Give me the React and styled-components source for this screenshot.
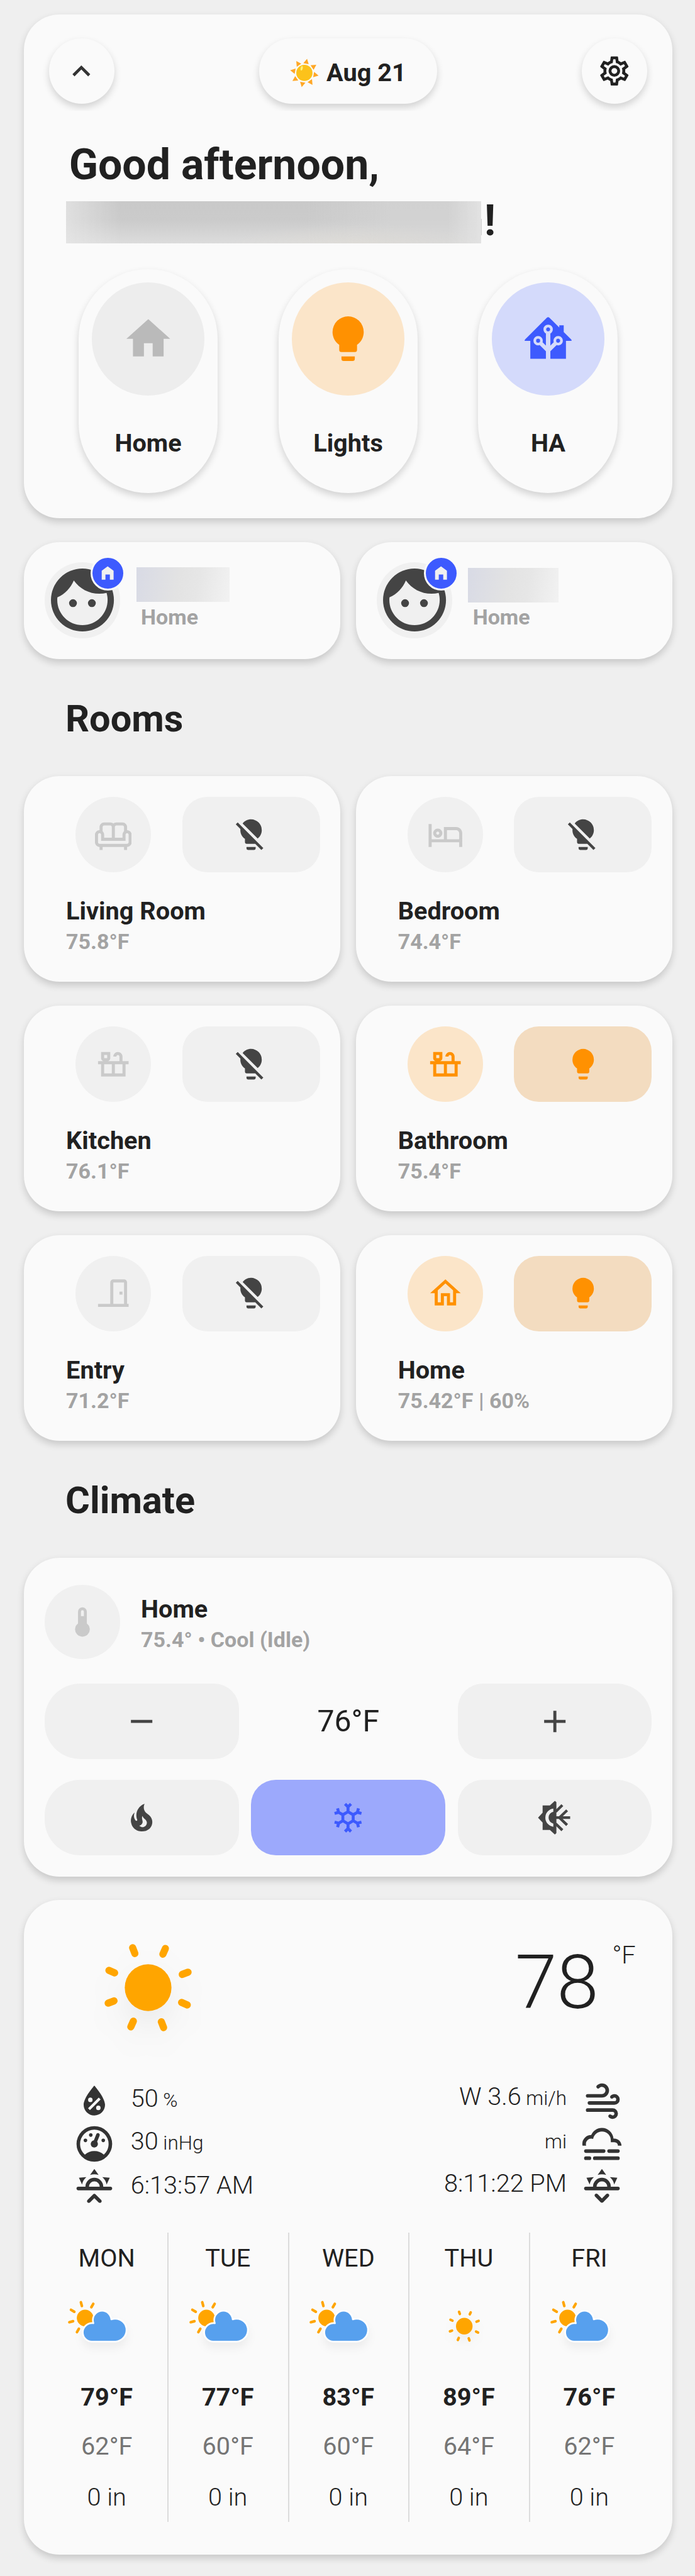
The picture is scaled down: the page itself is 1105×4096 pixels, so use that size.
import React from "react";
import styled, { createGlobalStyle, css } from "styled-components";

/* The layout is designed 390 units wide; 1rem equals 10 units. */
const GlobalStyle = createGlobalStyle`
  html { font-size: calc(100vw / 39); }
  *, *::before, *::after { box-sizing: border-box; }
  body { margin: 0; background: #efefef; }
`;

const color = {
  card: "#fafafa",
  text: "#212121",
  muted: "#a3a3a3",
  dark: "#444444",
  faint: "#cacaca",
  soft: "#f0f0f0",
  orange: "#ff9101",
  orangeSoft: "#fbe5c9",
  orangeButton: "#f3dcc0",
  blue: "#3d5afe",
  blueSoft: "#d4dafb",
  blueButton: "#9ca9fc",
};

const icons = {
  chevronUp: "M7.41,15.41L12,10.83L16.59,15.41L18,14L12,8L6,14L7.41,15.41Z",
  cog: "M12,8A4,4 0 0,1 16,12A4,4 0 0,1 12,16A4,4 0 0,1 8,12A4,4 0 0,1 12,8M12,10A2,2 0 0,0 10,12A2,2 0 0,0 12,14A2,2 0 0,0 14,12A2,2 0 0,0 12,10M10,22C9.75,22 9.54,21.82 9.5,21.58L9.13,18.93C8.5,18.68 7.96,18.34 7.44,17.94L4.95,18.95C4.73,19.03 4.46,18.95 4.34,18.73L2.34,15.27C2.21,15.05 2.27,14.78 2.46,14.63L4.57,12.97L4.5,12L4.57,11L2.46,9.37C2.27,9.22 2.21,8.95 2.34,8.73L4.34,5.27C4.46,5.05 4.73,4.96 4.95,5.05L7.44,6.05C7.96,5.66 8.5,5.32 9.13,5.07L9.5,2.42C9.54,2.18 9.75,2 10,2H14C14.25,2 14.46,2.18 14.5,2.42L14.87,5.07C15.5,5.32 16.04,5.66 16.56,6.05L19.05,5.05C19.27,4.96 19.54,5.05 19.66,5.27L21.66,8.73C21.79,8.95 21.73,9.22 21.54,9.37L19.43,11L19.5,12L19.43,13L21.54,14.63C21.73,14.78 21.79,15.05 21.66,15.27L19.66,18.73C19.54,18.95 19.27,19.04 19.05,18.95L16.56,17.95C16.04,18.34 15.5,18.68 14.87,18.93L14.5,21.58C14.46,21.82 14.25,22 14,22H10M11.25,4L10.88,6.61C9.68,6.86 8.62,7.5 7.85,8.39L5.44,7.35L4.69,8.65L6.8,10.2C6.4,11.37 6.4,12.64 6.8,13.8L4.68,15.36L5.43,16.66L7.86,15.62C8.63,16.5 9.68,17.14 10.87,17.38L11.24,20H12.76L13.13,17.39C14.32,17.14 15.37,16.5 16.14,15.62L18.57,16.66L19.32,15.36L17.2,13.81C17.6,12.64 17.6,11.37 17.2,10.2L19.31,8.65L18.56,7.35L16.15,8.39C15.38,7.5 14.32,6.86 13.12,6.62L12.75,4H11.25Z",
  home: "M10,20V14H14V20H19V12H22L12,3L2,12H5V20H10Z",
  homeVariant: "M12,3L20,9V21H15V14H9V21H4V9L12,3Z",
  homeOutline: "M12 5.69L17 10.19V18H15V12H9V18H7V10.19L12 5.69M12 3L2 12H5V20H11V14H13V20H19V12H22L12 3Z",
  homeAssistant: "M21.8,13H20V21H13V17.67L15.79,14.88L16.5,15C17.66,15 18.6,14.06 18.6,12.9C18.6,11.74 17.66,10.8 16.5,10.8A2.1,2.1 0 0,0 14.4,12.9L14.5,13.61L13,15.13V9.65C13.66,9.29 14.1,8.6 14.1,7.8A2.1,2.1 0 0,0 12,5.7A2.1,2.1 0 0,0 9.9,7.8C9.9,8.6 10.34,9.29 11,9.65V15.13L9.5,13.61L9.6,12.9A2.1,2.1 0 0,0 7.5,10.8A2.1,2.1 0 0,0 5.4,12.9A2.1,2.1 0 0,0 7.5,15L8.21,14.88L11,17.67V21H4V13H2.25C1.83,13 1.42,13 1.42,12.79C1.43,12.57 1.85,12.15 2.28,11.72L11,3C11.33,2.67 11.67,2.33 12,2.33C12.33,2.33 12.67,2.67 13,3L17,7V6H19V9L21.78,11.78C22.18,12.18 22.59,12.59 22.6,12.8C22.6,13 22.2,13 21.8,13M7.5,12A0.9,0.9 0 0,1 8.4,12.9A0.9,0.9 0 0,1 7.5,13.8A0.9,0.9 0 0,1 6.6,12.9A0.9,0.9 0 0,1 7.5,12M16.5,12C17,12 17.4,12.4 17.4,12.9C17.4,13.4 17,13.8 16.5,13.8A0.9,0.9 0 0,1 15.6,12.9A0.9,0.9 0 0,1 16.5,12M12,6.9C12.5,6.9 12.9,7.3 12.9,7.8C12.9,8.3 12.5,8.7 12,8.7C11.5,8.7 11.1,8.3 11.1,7.8C11.1,7.3 11.5,6.9 12,6.9Z",
  bulb: "M12,2A7,7 0 0,0 5,9C5,11.38 6.19,13.47 8,14.74V17A1,1 0 0,0 9,18H15A1,1 0 0,0 16,17V14.74C17.81,13.47 19,11.38 19,9A7,7 0 0,0 12,2M9,21A1,1 0 0,0 10,22H14A1,1 0 0,0 15,21V20H9V21Z",
  bulbOff: "M12,2C9.76,2 7.78,3.05 6.5,4.68L16.31,14.5C17.94,13.21 19,11.24 19,9A7,7 0 0,0 12,2M3.28,4L2,5.27L5.04,8.3C5,8.53 5,8.76 5,9C5,11.38 6.19,13.47 8,14.74V17A1,1 0 0,0 9,18H14.73L18.73,22L20,20.72L3.28,4M9,20V21A1,1 0 0,0 10,22H14A1,1 0 0,0 15,21V20H9Z",
  face: "M9,11.75A1.25,1.25 0 0,0 7.75,13A1.25,1.25 0 0,0 9,14.25A1.25,1.25 0 0,0 10.25,13A1.25,1.25 0 0,0 9,11.75M15,11.75A1.25,1.25 0 0,0 13.75,13A1.25,1.25 0 0,0 15,14.25A1.25,1.25 0 0,0 16.25,13A1.25,1.25 0 0,0 15,11.75M12,2A10,10 0 0,0 2,12A10,10 0 0,0 12,22A10,10 0 0,0 22,12A10,10 0 0,0 12,2M12,20C7.59,20 4,16.41 4,12C4,11.71 4,11.42 4.05,11.14C6.41,10.09 8.28,8.16 9.26,5.77C11.07,8.33 14.05,10 17.42,10C18.2,10 18.95,9.91 19.67,9.74C19.88,10.45 20,11.21 20,12C20,16.41 16.41,20 12,20Z",
  sofa: "M21 9V7C21 5.35 19.65 4 18 4H14C13.23 4 12.53 4.3 12 4.78C11.47 4.3 10.77 4 10 4H6C4.35 4 3 5.35 3 7V9C1.35 9 0 10.35 0 12V17C0 18.65 1.35 20 3 20V22H5V20H19V22H21V20C22.65 20 24 18.65 24 17V12C24 10.35 22.65 9 21 9M14 6H18C18.55 6 19 6.45 19 7V9.78C18.39 10.33 18 11.12 18 12V14H13V7C13 6.45 13.45 6 14 6M5 7C5 6.45 5.45 6 6 6H10C10.55 6 11 6.45 11 7V14H6V12C6 11.12 5.61 10.33 5 9.78V7M22 17C22 17.55 21.55 18 21 18H3C2.45 18 2 17.55 2 17V12C2 11.45 2.45 11 3 11S4 11.45 4 12V16H20V12C20 11.45 20.45 11 21 11S22 11.45 22 12V17Z",
  bed: "M7 14C8.66 14 10 12.66 10 11C10 9.34 8.66 8 7 8C5.34 8 4 9.34 4 11C4 12.66 5.34 14 7 14M7 10C7.55 10 8 10.45 8 11C8 11.55 7.55 12 7 12C6.45 12 6 11.55 6 11C6 10.45 6.45 10 7 10M19 7H11V15H3V5H1V20H3V17H21V20H23V11C23 8.79 21.21 7 19 7M21 15H13V9H19C20.1 9 21 9.9 21 11V15Z",
  counter: "M22 10H18V7C18 5.34 16.66 4 15 4C13.34 4 12 5.34 12 7H14C14 6.45 14.45 6 15 6C15.55 6 16 6.45 16 7V10H8C9.1 10 10 9.1 10 8V4H4V8C4 9.1 4.9 10 6 10H2V12H4V20H20V12H22V10M6 6H8V8H6V6M6 12H11V18H6V12M18 18H13V12H18V18Z",
  door: "M16,11H18V13H16V11M12,3H19C20.11,3 21,3.89 21,5V19H22V21H2V19H10V5C10,3.89 10.89,3 12,3M12,5V19H19V5H12Z",
  thermometer: "M15 13V5A3 3 0 0 0 9 5V13A5 5 0 1 0 15 13M12 4A1 1 0 0 1 13 5V8H11V5A1 1 0 0 1 12 4Z",
  minus: "M19,13H5V11H19V13Z",
  plus: "M19,13H13V19H11V13H5V11H11V5H13V11H19V13Z",
  fire: "M17.66 11.2C17.43 10.9 17.15 10.64 16.89 10.38C16.22 9.78 15.46 9.35 14.82 8.72C13.33 7.26 13 4.85 13.95 3C13 3.23 12.17 3.75 11.46 4.32C8.87 6.4 7.85 10.07 9.07 13.22C9.11 13.32 9.15 13.42 9.15 13.55C9.15 13.77 9 13.97 8.8 14.05C8.57 14.15 8.33 14.09 8.14 13.93C8.08 13.88 8.04 13.83 8 13.76C6.87 12.33 6.69 10.28 7.45 8.64C5.78 10 4.87 12.3 5 14.47C5.06 14.97 5.12 15.47 5.29 15.97C5.43 16.57 5.7 17.17 6 17.7C7.08 19.43 8.95 20.67 10.96 20.92C13.1 21.19 15.39 20.8 17.03 19.32C18.86 17.66 19.5 15 18.56 12.72L18.43 12.46C18.22 12 17.66 11.2 17.66 11.2M14.5 17.5C14.22 17.74 13.76 18 13.4 18.1C12.28 18.5 11.16 17.94 10.5 17.28C11.69 17 12.4 16.12 12.61 15.23C12.78 14.43 12.46 13.77 12.33 13C12.21 12.26 12.23 11.63 12.5 10.94C12.69 11.32 12.89 11.7 13.13 12C13.9 13 15.11 13.44 15.37 14.8C15.41 14.94 15.43 15.08 15.43 15.23C15.46 16.05 15.1 16.95 14.5 17.5H14.5Z",
  snowflake: "M20.79,13.95L18.46,14.57L16.46,13.44V10.56L18.46,9.43L20.79,10.05L21.31,8.12L19.54,7.65L20,5.88L18.07,5.36L17.45,7.69L15.45,8.82L13,7.38V5.12L14.71,3.41L13.29,2L12,3.29L10.71,2L9.29,3.41L11,5.12V7.38L8.5,8.82L6.5,7.69L5.92,5.36L4,5.88L4.47,7.65L2.7,8.12L3.22,10.05L5.55,9.43L7.55,10.56V13.45L5.55,14.58L3.22,13.96L2.7,15.89L4.47,16.36L4,18.12L5.93,18.64L6.55,16.31L8.55,15.18L11,16.62V18.88L9.29,20.59L10.71,22L12,20.71L13.29,22L14.7,20.59L13,18.88V16.62L15.5,15.17L17.5,16.3L18.12,18.63L20,18.12L19.53,16.35L21.3,15.88L20.79,13.95M9.5,10.56L12,9.11L14.5,10.56V13.44L12,14.89L9.5,13.44V10.56Z",
  humidity: "M12,3.25C12,3.25 6,10 6,14C6,17.32 8.69,20 12,20A6,6 0 0,0 18,14C18,10 12,3.25 12,3.25M14.47,9.97L15.53,11.03L9.53,17.03L8.47,15.97M9.75,10A1.25,1.25 0 0,1 11,11.25A1.25,1.25 0 0,1 9.75,12.5A1.25,1.25 0 0,1 8.5,11.25A1.25,1.25 0 0,1 9.75,10M14.25,14.5A1.25,1.25 0 0,1 15.5,15.75A1.25,1.25 0 0,1 14.25,17A1.25,1.25 0 0,1 13,15.75A1.25,1.25 0 0,1 14.25,14.5Z",
  gauge: "M12,2A10,10 0 0,0 2,12A10,10 0 0,0 12,22A10,10 0 0,0 22,12A10,10 0 0,0 12,2M12,4A8,8 0 0,1 20,12C20,14.4 19,16.5 17.3,18C15.9,16.7 14,16 12,16C10,16 8.2,16.7 6.7,18C5,16.5 4,14.4 4,12A8,8 0 0,1 12,4M14,5.89C13.62,5.9 13.26,6.15 13.1,6.54L11.81,9.77L11.71,10C11,10.13 10.41,10.6 10.14,11.26C9.73,12.29 10.23,13.45 11.26,13.86C12.29,14.27 13.45,13.77 13.86,12.74C14.12,12.08 14,11.32 13.57,10.76L13.67,10.5L14.96,7.29L14.97,7.26C15.17,6.75 14.92,6.17 14.41,5.96C14.28,5.91 14.15,5.89 14,5.89M10,6A1,1 0 0,0 9,7A1,1 0 0,0 10,8A1,1 0 0,0 11,7A1,1 0 0,0 10,6M7,9A1,1 0 0,0 6,10A1,1 0 0,0 7,11A1,1 0 0,0 8,10A1,1 0 0,0 7,9M17,9A1,1 0 0,0 16,10A1,1 0 0,0 17,11A1,1 0 0,0 18,10A1,1 0 0,0 17,9Z",
  sunrise: "M3,12H7A5,5 0 0,1 12,7A5,5 0 0,1 17,12H21A1,1 0 0,1 22,13A1,1 0 0,1 21,14H3A1,1 0 0,1 2,13A1,1 0 0,1 3,12M15,12A3,3 0 0,0 12,9A3,3 0 0,0 9,12H15M12,2L14.39,5.42C13.65,5.15 12.84,5 12,5C11.16,5 10.35,5.15 9.61,5.42L12,2M3.34,7L7.5,6.65C6.9,7.16 6.36,7.78 5.94,8.5C5.5,9.24 5.25,10 5.11,10.79L3.34,7M20.65,7L18.88,10.79C18.74,10 18.47,9.23 18.05,8.5C17.63,7.78 17.1,7.15 16.5,6.64L20.65,7M12.71,16.3L15.82,19.41C16.21,19.8 16.21,20.43 15.82,20.82C15.43,21.21 14.8,21.21 14.41,20.82L12,18.41L9.59,20.82C9.2,21.21 8.57,21.21 8.18,20.82C7.79,20.43 7.79,19.8 8.18,19.41L11.29,16.3C11.5,16.1 11.74,16 12,16C12.26,16 12.5,16.1 12.71,16.3Z",
  sunset: "M3,12H7A5,5 0 0,1 12,7A5,5 0 0,1 17,12H21A1,1 0 0,1 22,13A1,1 0 0,1 21,14H3A1,1 0 0,1 2,13A1,1 0 0,1 3,12M15,12A3,3 0 0,0 12,9A3,3 0 0,0 9,12H15M12,2L14.39,5.42C13.65,5.15 12.84,5 12,5C11.16,5 10.35,5.15 9.61,5.42L12,2M3.34,7L7.5,6.65C6.9,7.16 6.36,7.78 5.94,8.5C5.5,9.24 5.25,10 5.11,10.79L3.34,7M20.65,7L18.88,10.79C18.74,10 18.47,9.23 18.05,8.5C17.63,7.78 17.1,7.15 16.5,6.64L20.65,7M12.71,20.71L15.82,17.6C16.21,17.21 16.21,16.57 15.82,16.18C15.43,15.79 14.8,15.79 14.41,16.18L12,18.59L9.59,16.18C9.2,15.79 8.57,15.79 8.18,16.18C7.79,16.57 7.79,17.21 8.18,17.6L11.29,20.71C11.5,20.9 11.74,21 12,21C12.26,21 12.5,20.9 12.71,20.71Z",
  wind: "M4,10A1,1 0 0,1 3,9A1,1 0 0,1 4,8H12A2,2 0 0,0 14,6A2,2 0 0,0 12,4C11.45,4 10.95,4.22 10.59,4.59C10.2,5 9.56,5 9.17,4.59C8.78,4.2 8.78,3.56 9.17,3.17C9.9,2.45 10.9,2 12,2A4,4 0 0,1 16,6A4,4 0 0,1 12,10H4M19,12A1,1 0 0,0 20,11A1,1 0 0,0 19,10C18.72,10 18.47,10.11 18.29,10.29C17.9,10.68 17.27,10.68 16.88,10.29C16.5,9.9 16.5,9.27 16.88,8.88C17.42,8.34 18.17,8 19,8A3,3 0 0,1 22,11A3,3 0 0,1 19,14H5A1,1 0 0,1 4,13A1,1 0 0,1 5,12H19M18,18H4A1,1 0 0,1 3,17A1,1 0 0,1 4,16H18A3,3 0 0,1 21,19A3,3 0 0,1 18,22C17.17,22 16.42,21.66 15.88,21.12C15.5,20.73 15.5,20.1 15.88,19.71C16.27,19.32 16.9,19.32 17.29,19.71C17.47,19.89 17.72,20 18,20A1,1 0 0,0 19,19A1,1 0 0,0 18,18Z",
  fog: "M3,15H13A1,1 0 0,1 14,16A1,1 0 0,1 13,17H3A1,1 0 0,1 2,16A1,1 0 0,1 3,15M16,15H21A1,1 0 0,1 22,16A1,1 0 0,1 21,17H16A1,1 0 0,1 15,16A1,1 0 0,1 16,15M1,12A5,5 0 0,1 6,7C7,4.65 9.3,3 12,3C15.43,3 18.24,5.66 18.5,9.03L19,9C21.19,9 22.97,10.76 23,13H21A2,2 0 0,0 19,11H17V10A5,5 0 0,0 12,5C9.5,5 7.45,6.82 7.06,9.19C6.73,9.07 6.37,9 6,9A3,3 0 0,0 3,12C3,12.35 3.06,12.69 3.17,13H1.1L1,12M3,19H5A1,1 0 0,1 6,20A1,1 0 0,1 5,21H3A1,1 0 0,1 2,20A1,1 0 0,1 3,19M8,19H21A1,1 0 0,1 22,20A1,1 0 0,1 21,21H8A1,1 0 0,1 7,20A1,1 0 0,1 8,19Z",
};

/* ---------- shared parts ---------- */

const Page = styled.main`
  min-height: 100vh;
  padding: 0.82rem 1.27rem 1.2rem 1.34rem;
  background: #efefef;
  color: ${color.text};
  font-family: Roboto, "Liberation Sans", sans-serif;
`;

const raised = css`
  background: ${color.card};
  box-shadow: 0 0.2rem 0.4rem rgba(0, 0, 0, 0.16);
`;

const Card = styled.section`
  ${raised}
  border-radius: 2rem;
`;

const Heading = styled.h2`
  display: flex;
  align-items: center;
  height: 6.57rem;
  margin: 0;
  padding: 0.15rem 0 0 2.33rem;
  font-size: 2.1rem;
  font-weight: 700;
`;

const Svg = styled.svg`
  display: block;
  flex: none;
  width: ${(p) => p.$size}rem;
  height: ${(p) => p.$size}rem;
  fill: ${(p) => p.$fill};
`;

const Icon = ({ name, size = 2.06, fill = color.dark }) => (
  <Svg viewBox="0 0 24 24" $size={size} $fill={fill} aria-hidden="true">
    <path d={icons[name]} />
  </Svg>
);

const Name = styled.div`
  font-size: 1.4rem;
  line-height: 1.8rem;
  font-weight: 700;
`;

const State = styled.div`
  font-size: 1.2rem;
  line-height: 1.68rem;
  font-weight: 700;
  color: ${color.muted};
`;

const Circle = styled.div`
  display: flex;
  align-items: center;
  justify-content: center;
  flex: none;
  width: 4.24rem;
  height: ${(p) => p.$height || 4.24}rem;
  border-radius: 50%;
  background: ${(p) => (p.$on ? color.orangeSoft : color.soft)};
`;

/* ---------- header ---------- */

const HeaderCard = styled(Card)`
  height: 28.27rem;
  padding-top: 1.34rem;
`;

const TopBar = styled.div`
  display: flex;
  justify-content: space-between;
  height: 3.66rem;
  padding: 0 1.41rem;
  clip-path: inset(-1rem 0 -0.4rem);
`;

const RoundButton = styled.button`
  ${raised}
  display: flex;
  align-items: center;
  justify-content: center;
  width: 3.66rem;
  height: 3.66rem;
  padding: 0;
  border: 0;
  border-radius: 50%;
`;

const DateChip = styled.div`
  ${raised}
  display: flex;
  align-items: center;
  justify-content: center;
  gap: 0.42rem;
  width: 9.97rem;
  padding-top: 0.2rem;
  border-radius: 1.83rem;
  font-size: 1.4rem;
  font-weight: 700;
`;

const Greeting = styled.h1`
  margin: 1.87rem 0 0;
  padding-left: 2.53rem;
  font-size: 2.4rem;
  line-height: 3.13rem;
  font-weight: 700;
`;

const GreetingLine = styled.span`
  display: flex;
  align-items: center;
`;

const HiddenGreetingName = styled.span`
  position: relative;
  width: 23.3rem;
  height: 2.37rem;
  margin: 0.2rem 0.16rem 0 -0.16rem;
  background:
    radial-gradient(ellipse 30% 45% at 70% 100%, rgba(224, 220, 212, 0.5), transparent),
    linear-gradient(90deg, rgba(232, 232, 232, 0.7), transparent 13%, transparent 58%, rgba(215, 215, 215, 0.6) 78%, rgba(215, 215, 215, 0.6) 92%, #e2e2e2),
    linear-gradient(180deg, #c9c9c9, #cbcbcb 45%, #dcdcdc);
  &::after {
    content: "";
    position: absolute;
    left: 100%;
    top: 0.98rem;
    width: 1px;
    height: 0.92rem;
    background: #d0d0d0;
  }
`;

const NavRow = styled.nav`
  display: flex;
  justify-content: space-between;
  padding: 0 3.06rem;
  margin-top: 1.17rem;
`;

const NavPill = styled.div`
  ${raised}
  display: flex;
  flex-direction: column;
  align-items: center;
  width: 7.83rem;
  height: 12.55rem;
  padding-top: 0.74rem;
  border-radius: 3.92rem;
  font-size: 1.4rem;
  line-height: 5.38rem;
  font-weight: 700;
`;

const NavCircle = styled.div`
  display: flex;
  align-items: center;
  justify-content: center;
  width: 6.33rem;
  height: 6.33rem;
  border-radius: 50%;
  background: ${(p) => p.$bg};
`;

const SunEmoji = () => (
  <Svg viewBox="-8 -8 16 16" $size={1.62} $fill="#ffa726" aria-hidden="true">
    {[10, 55, 100, 145, 190, 235, 280, 325].map((a) => (
      <path key={a} d="M-1.5 -5.2L0.1 -8L1.5 -5.2Z" transform={`rotate(${a})`} />
    ))}
    <circle r="4.5" fill="#fcc21b" />
    <ellipse cx="-2" cy="-2.2" rx="0.6" ry="1.3" fill="#fff176" transform="rotate(12)" />
  </Svg>
);

/* ---------- people ---------- */

const TwoColumns = styled.div`
  display: grid;
  grid-template-columns: 1fr 1fr;
  gap: 1.335rem 0.85rem;
`;

const People = styled(TwoColumns)`
  margin-top: 1.33rem;
`;

const PersonCard = styled(Card)`
  display: flex;
  gap: 1.16rem;
  height: 6.57rem;
  padding: 1.15rem 0 0 1.17rem;
`;

const Avatar = styled(Circle)`
  position: relative;
`;

const Badge = styled.span`
  position: absolute;
  top: -0.38rem;
  left: ${(p) => p.$left}rem;
  display: flex;
  align-items: center;
  justify-content: center;
  width: 1.94rem;
  height: 1.94rem;
  border: 0.14rem solid ${color.card};
  border-radius: 50%;
  background: ${color.blue};
`;

const PersonInfo = styled.div`
  display: flex;
  flex-direction: column;
  justify-content: flex-end;
  gap: ${(p) => p.$gap}rem;
  height: 3.93rem;
`;

const HiddenName = styled.div`
  width: ${(p) => p.$width}rem;
  height: 1.92rem;
  margin-left: -0.26rem;
  background: linear-gradient(100deg, #d8dae5, #e3e3e3 45%, #e6e6e6 65%, #f2f2f2);
`;

const Person = ({ width, gap, badgeLeft }) => (
  <PersonCard>
    <Avatar>
      <Icon name="face" size={4.24} />
      <Badge $left={badgeLeft}>
        <Icon name="homeVariant" size={1} fill="#f0f0f0" />
      </Badge>
    </Avatar>
    <PersonInfo $gap={gap}>
      <HiddenName $width={width} />
      <State>Home</State>
    </PersonInfo>
  </PersonCard>
);

/* ---------- rooms ---------- */

const RoomCard = styled(Card)`
  height: 11.545rem;
  padding: 1.15rem 1.15rem 0;
`;

const RoomControls = styled.div`
  display: grid;
  grid-template-columns: 1fr 1fr;
  justify-items: center;
  height: 4.24rem;
  margin: 0 0 1.27rem;
`;

const RoomButton = styled.div`
  display: flex;
  align-items: center;
  justify-content: center;
  width: 100%;
  border-radius: 1.4rem;
  background: ${(p) => (p.$on ? color.orangeButton : color.soft)};
`;

const RoomText = styled.div`
  padding-left: 1.22rem;
`;

const rooms = [
  { name: "Living Room", state: "75.8°F", icon: "sofa" },
  { name: "Bedroom", state: "74.4°F", icon: "bed" },
  { name: "Kitchen", state: "76.1°F", icon: "counter" },
  { name: "Bathroom", state: "75.4°F", icon: "counter", on: true },
  { name: "Entry", state: "71.2°F", icon: "door" },
  { name: "Home", state: "75.42°F | 60%", icon: "homeOutline", on: true },
];

const Room = ({ name, state, icon, on }) => (
  <RoomCard>
    <RoomControls>
      <Circle $on={on}>
        <Icon name={icon} fill={on ? color.orange : color.faint} />
      </Circle>
      <RoomButton $on={on}>
        <Icon name={on ? "bulb" : "bulbOff"} fill={on ? color.orange : color.dark} />
      </RoomButton>
    </RoomControls>
    <RoomText>
      <Name>{name}</Name>
      <State>{state}</State>
    </RoomText>
  </RoomCard>
);

/* ---------- climate ---------- */

const ClimateCard = styled(Card)`
  height: 17.88rem;
  padding: 1.5rem 1.15rem 0 1.17rem;
`;

const ClimateHead = styled.div`
  display: flex;
  gap: 1.16rem;
  margin-bottom: 1.39rem;
`;

const ClimateText = styled.div`
  padding-top: 0.46rem;
`;

const ClimateGrid = styled.div`
  display: grid;
  grid-template-columns: repeat(3, 1fr);
  grid-auto-rows: 4.24rem;
  gap: 1.16rem 0.7rem;
`;

const corners = {
  left: "2rem 1.4rem 1.4rem 2rem",
  middle: "1.4rem",
  right: "1.4rem 2rem 2rem 1.4rem",
};

const ClimateButton = styled.button`
  display: flex;
  align-items: center;
  justify-content: center;
  padding: 0;
  border: 0;
  border-radius: ${(p) => corners[p.$side]};
  background: ${(p) => (p.$active ? color.blueButton : color.soft)};
`;

const Target = styled.div`
  display: flex;
  align-items: center;
  justify-content: center;
  font-size: 1.7rem;
`;

const SunSnowflake = () => (
  <Svg viewBox="0 0 24 24" $size={2.06} $fill={color.dark} aria-hidden="true">
    <path
      fillRule="evenodd"
      d="M12 1L8.75 4H4V8.75L1 12L4 15.25V20H8.75L12 23L13 22.1V1.9L12 1M11 6.05V8.1A4 4 0 0 0 11 15.9V17.95A6 6 0 0 1 11 6.05Z"
    />
    <path
      fill="none"
      stroke={color.dark}
      strokeWidth="1.75"
      d="M12.5 12H22M12.5 8.1L16.9 3.8M12.5 15.9L16.9 20.2M15 12L20 7.2M15 12L20 16.8"
    />
  </Svg>
);

/* ---------- weather ---------- */

const WeatherCard = styled(Card)`
  height: 36.74rem;
  margin-top: 1.32rem;
`;

const Now = styled.div`
  display: flex;
  align-items: flex-start;
  height: 10.08rem;
  padding: 0.4rem 2.06rem 0 2.47rem;
`;

const Temperature = styled.div`
  margin: 1.73rem 0.77rem 0 auto;
  font-size: 4.22rem;
  line-height: 5rem;
  font-weight: 300;
`;

const Unit = styled.div`
  margin-top: 1.89rem;
  font-size: 1.4rem;
  line-height: 1.6rem;
  font-weight: 300;
`;

const SunGroup = styled.g`
  filter: drop-shadow(0 4px 3px rgba(0, 0, 0, 0.05));
`;

/* A ray runs outwards from the disc; `from` and `to` are distances from the centre. */
const Sun = ({ x, y, turn, from, to }) => (
  <SunGroup>
    <g transform={`translate(${x} ${y})`}>
      <circle r="6" fill="orange" />
      {[0, 45, 90, 135, 180, 225, 270, 315].map((a) => (
        <line
          key={a}
          y1={-from}
          y2={-to}
          stroke="orange"
          strokeWidth="1.85"
          strokeLinecap="round"
          transform={`rotate(${a + turn})`}
        />
      ))}
    </g>
  </SunGroup>
);

const ForecastSvg = styled(Svg)`
  margin: 0.24rem 0 0 0.12rem;
  overflow: visible;
`;

const ForecastIcon = ({ kind }) => (
  <ForecastSvg viewBox="0 0 64 64" $size={4.97} aria-hidden="true">
    {kind === "sunny" ? (
      <Sun x={27.8} y={32.6} turn={-20} from={9.4} to={11} />
    ) : (
      <>
        <g transform="translate(15.6 26.7)">
          <circle r="6" fill="orange" />
          {[-15, 30, -60, -105, -150].map((a) => (
            <line
              key={a}
              y1="-9"
              y2="-11.8"
              stroke="orange"
              strokeWidth="1.9"
              strokeLinecap="round"
              transform={`rotate(${a})`}
            />
          ))}
        </g>
        <SunGroup>
          <path
            transform="translate(-2.2 0)"
            fill="#57a0ee"
            stroke="#ffffff"
            strokeWidth="1.2"
            strokeLinejoin="round"
            d="M47.7,35.4c0-4.6-3.7-8.2-8.2-8.2c-1,0-1.9,0.2-2.8,0.5c-0.3-3.4-3.1-6.2-6.6-6.2c-3.7,0-6.7,3-6.7,6.7c0,0.8,0.2,1.6,0.4,2.3c-0.3-0.1-0.7-0.1-1-0.1c-3.7,0-6.7,3-6.7,6.7c0,3.6,2.9,6.6,6.5,6.7l17.2,0C44.2,43.3,47.7,39.8,47.7,35.4z"
          />
        </SunGroup>
      </>
    )}
  </ForecastSvg>
);

const Stats = styled.div`
  display: flex;
  justify-content: space-between;
  padding: 0 2.74rem 0 2.75rem;
`;

const StatRow = styled.div`
  display: flex;
  flex-direction: ${(p) => (p.$reverse ? "row-reverse" : "row")};
  align-items: center;
  gap: ${(p) => (p.$reverse ? 0.79 : 0.84)}rem;
  height: 2.41rem;
`;

const StatText = styled.div`
  padding-bottom: ${(p) => (p.$reverse ? 0.38 : 0.2)}rem;
  font-size: 1.4rem;
  line-height: 1.6rem;
  font-weight: 300;
  white-space: nowrap;
  small {
    font-size: 1.11rem;
  }
`;

const Stat = ({ icon, value, unit, reverse }) => (
  <StatRow $reverse={reverse}>
    <Icon name={icon} size={2.4} fill="#333333" />
    <StatText $reverse={reverse}>
      {value}
      {unit && <small> {unit}</small>}
    </StatText>
  </StatRow>
);

const Forecast = styled.div`
  display: grid;
  grid-template-columns: repeat(5, 1fr);
  height: 16.22rem;
  margin: 1.37rem 1.29rem 0 1.3rem;
`;

const Day = styled.div`
  display: flex;
  flex-direction: column;
  align-items: center;
  padding: 0.46rem 0.06rem 0 0;
  font-size: 1.4rem;
  line-height: 2rem;
  & + & {
    border-left: 2px solid #dcdcdc;
  }
`;

const High = styled.div`
  margin-top: 0.59rem;
  font-weight: 700;
`;

const Low = styled.div`
  margin-top: 0.74rem;
  color: #757575;
`;

const Rain = styled.div`
  margin-top: 0.84rem;
  font-weight: 300;
`;

const days = [
  { day: "MON", kind: "cloudy", high: 79, low: 62 },
  { day: "TUE", kind: "cloudy", high: 77, low: 60 },
  { day: "WED", kind: "cloudy", high: 83, low: 60 },
  { day: "THU", kind: "sunny", high: 89, low: 64 },
  { day: "FRI", kind: "cloudy", high: 76, low: 62 },
];

export default function App() {
  return (
    <>
      <GlobalStyle />
      <Page>
        <HeaderCard>
          <TopBar>
            <RoundButton aria-label="Collapse">
              <Icon name="chevronUp" size={2} fill="#333333" />
            </RoundButton>
            <DateChip>
              <SunEmoji />
              <span>Aug 21</span>
            </DateChip>
            <RoundButton aria-label="Settings">
              <Icon name="cog" size={1.96} fill={color.text} />
            </RoundButton>
          </TopBar>
          <Greeting>
            Good afternoon,
            <GreetingLine>
              <HiddenGreetingName />!
            </GreetingLine>
          </Greeting>
          <NavRow>
            <NavPill>
              <NavCircle $bg="#ededed">
                <Icon name="home" size={2.95} fill="#bababa" />
              </NavCircle>
              Home
            </NavPill>
            <NavPill>
              <NavCircle $bg={color.orangeSoft}>
                <Icon name="bulb" size={3} fill={color.orange} />
              </NavCircle>
              Lights
            </NavPill>
            <NavPill>
              <NavCircle $bg={color.blueSoft}>
                <Icon name="homeAssistant" size={3} fill={color.blue} />
              </NavCircle>
              HA
            </NavPill>
          </NavRow>
        </HeaderCard>

        <People>
          <Person width={5.22} gap={0.05} badgeLeft={2.57} />
          <Person width={5.07} gap={0.02} badgeLeft={2.66} />
        </People>

        <Heading>Rooms</Heading>
        <TwoColumns>
          {rooms.map((room) => (
            <Room key={room.name} {...room} />
          ))}
        </TwoColumns>

        <Heading>Climate</Heading>
        <ClimateCard>
          <ClimateHead>
            <Circle $height={4.16}>
              <Icon name="thermometer" size={1.98} fill={color.faint} />
            </Circle>
            <ClimateText>
              <Name>Home</Name>
              <State>75.4° • Cool (Idle)</State>
            </ClimateText>
          </ClimateHead>
          <ClimateGrid>
            <ClimateButton $side="left" aria-label="Lower">
              <Icon name="minus" />
            </ClimateButton>
            <Target>76°F</Target>
            <ClimateButton $side="right" aria-label="Raise">
              <Icon name="plus" />
            </ClimateButton>
            <ClimateButton $side="left" aria-label="Heat">
              <Icon name="fire" />
            </ClimateButton>
            <ClimateButton $side="middle" $active aria-label="Cool">
              <Icon name="snowflake" size={2} fill={color.blue} />
            </ClimateButton>
            <ClimateButton $side="right" aria-label="Heat and cool">
              <SunSnowflake />
            </ClimateButton>
          </ClimateGrid>
        </ClimateCard>

        <WeatherCard>
          <Now>
            <Svg viewBox="-20.6 -20.6 41.2 41.2" $size={9} aria-hidden="true">
              <Sun x={0} y={0} turn={-21.2} from={9.4} to={11} />
            </Svg>
            <Temperature>78</Temperature>
            <Unit>°F</Unit>
          </Now>
          <Stats>
            <div>
              <Stat icon="humidity" value="50" unit="%" />
              <Stat icon="gauge" value="30" unit="inHg" />
              <Stat icon="sunrise" value="6:13:57 AM" />
            </div>
            <div>
              <Stat reverse icon="wind" value="W 3.6" unit="mi/h" />
              <Stat reverse icon="fog" value="" unit="mi" />
              <Stat reverse icon="sunset" value="8:11:22 PM" />
            </div>
          </Stats>
          <Forecast>
            {days.map((d) => (
              <Day key={d.day}>
                {d.day}
                <ForecastIcon kind={d.kind} />
                <High>{d.high}°F</High>
                <Low>{d.low}°F</Low>
                <Rain>0 in</Rain>
              </Day>
            ))}
          </Forecast>
        </WeatherCard>
      </Page>
    </>
  );
}
